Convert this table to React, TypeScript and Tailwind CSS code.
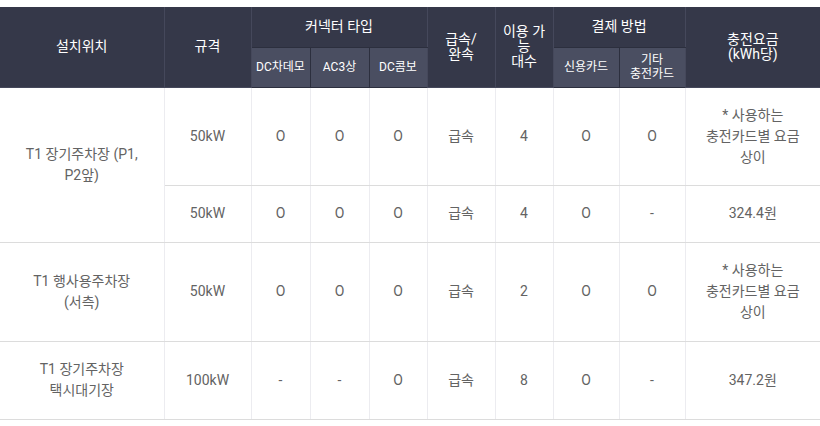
const FONT = "font-['Roboto','Noto_Sans_CJK_KR',sans-serif]";

type Row = {
  loc?: { text: string[]; span: number };
  spec: string;
  chademo: string;
  ac3: string;
  combo: string;
  speed: string;
  count: string;
  credit: string;
  other: string;
  fee: string[];
  h: string;
};

const rows: Row[] = [
  {
    loc: { text: ["T1 장기주차장 (P1,", "P2앞)"], span: 2 },
    spec: "50kW",
    chademo: "O",
    ac3: "O",
    combo: "O",
    speed: "급속",
    count: "4",
    credit: "O",
    other: "O",
    fee: ["* 사용하는", "충전카드별 요금", "상이"],
    h: "h-[98px]",
  },
  {
    spec: "50kW",
    chademo: "O",
    ac3: "O",
    combo: "O",
    speed: "급속",
    count: "4",
    credit: "O",
    other: "-",
    fee: ["324.4원"],
    h: "h-[57px]",
  },
  {
    loc: { text: ["T1 행사용주차장", "(서측)"], span: 1 },
    spec: "50kW",
    chademo: "O",
    ac3: "O",
    combo: "O",
    speed: "급속",
    count: "2",
    credit: "O",
    other: "O",
    fee: ["* 사용하는", "충전카드별 요금", "상이"],
    h: "h-[99px]",
  },
  {
    loc: { text: ["T1 장기주차장", "택시대기장"], span: 1 },
    spec: "100kW",
    chademo: "-",
    ac3: "-",
    combo: "O",
    speed: "급속",
    count: "8",
    credit: "O",
    other: "-",
    fee: ["347.2원"],
    h: "h-[78px]",
  },
];

const th = "border border-[#45485b] bg-[#353849] text-white font-normal text-[14px] leading-[15px] text-center align-middle";
const sub = "border border-[#2c2f3e] bg-[#4a4e61] text-white font-normal text-[12px] leading-[14px] text-center align-middle";
const td = "border-x border-x-[#ececf0] border-y border-y-[#dcdcdc] text-center align-middle text-[14px] leading-[21px] text-[#636363]";

export default function App() {
  return (
    <div className={`w-[820px] h-[426px] bg-white pt-[7px] ${FONT}`}>
      <table className="w-[820px] table-fixed border-collapse border-b border-b-[#aaa]">
        <colgroup>
          <col className="w-[164px]" />
          <col className="w-[87px]" />
          <col className="w-[59px]" />
          <col className="w-[59px]" />
          <col className="w-[58px]" />
          <col className="w-[68px]" />
          <col className="w-[58px]" />
          <col className="w-[66px]" />
          <col className="w-[66px]" />
          <col className="w-[135px]" />
        </colgroup>
        <thead>
          <tr className="h-[40px]">
            <th rowSpan={2} className={`${th} border-t-0 border-l-0`}>설치위치</th>
            <th rowSpan={2} className={`${th} border-t-0`}>규격</th>
            <th colSpan={3} className={`${th} border-t-0 border-b-[#2c2f3e]`}>커넥터 타입</th>
            <th rowSpan={2} className={`${th} border-t-0`}>
              급속/
              <br />
              완속
            </th>
            <th rowSpan={2} className={`${th} border-t-0 px-[4px]`}>
              이용 가능
              <br />
              대수
            </th>
            <th colSpan={2} className={`${th} border-t-0 border-b-[#2c2f3e]`}>결제 방법</th>
            <th rowSpan={2} className={`${th} border-t-0 border-r-0`}>
              충전요금
              <br />
              (kWh당)
            </th>
          </tr>
          <tr className="h-[40px]">
            <th className={sub}>DC차데모</th>
            <th className={sub}>AC3상</th>
            <th className={sub}>DC콤보</th>
            <th className={sub}>신용카드</th>
            <th className={sub}>
              기타
              <br />
              충전카드
            </th>
          </tr>
        </thead>
        <tbody>
          {rows.map((r, i) => (
            <tr key={i} className={r.h}>
              {r.loc && (
                <td rowSpan={r.loc.span} className={`${td} border-l-0`}>
                  {r.loc.text.map((t, j) => (
                    <div key={j}>{t}</div>
                  ))}
                </td>
              )}
              <td className={td}>{r.spec}</td>
              <td className={td}>{r.chademo}</td>
              <td className={td}>{r.ac3}</td>
              <td className={td}>{r.combo}</td>
              <td className={td}>{r.speed}</td>
              <td className={td}>{r.count}</td>
              <td className={td}>{r.credit}</td>
              <td className={td}>{r.other}</td>
              <td className={`${td} border-r-0`}>
                {r.fee.map((t, j) => (
                  <div key={j}>{t}</div>
                ))}
              </td>
            </tr>
          ))}
        </tbody>
      </table>
    </div>
  );
}
